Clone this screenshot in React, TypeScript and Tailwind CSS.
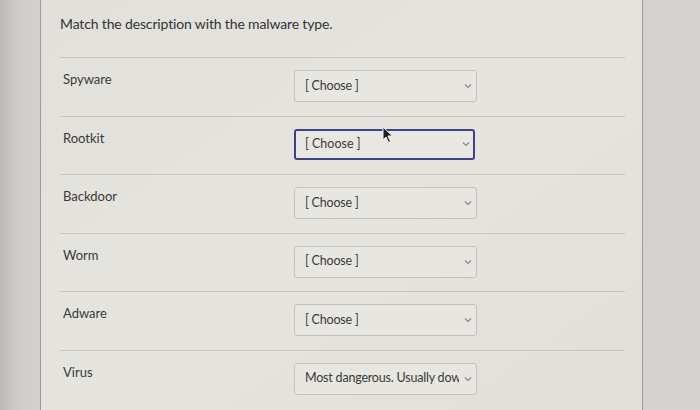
import React from 'react';

const rows = [
  { label: 'Spyware', value: '[ Choose ]' },
  { label: 'Rootkit', value: '[ Choose ]', focused: true },
  { label: 'Backdoor', value: '[ Choose ]' },
  { label: 'Worm', value: '[ Choose ]' },
  { label: 'Adware', value: '[ Choose ]' },
  { label: 'Virus', value: 'Most dangerous. Usually downloads' },
];

const Chevron = () => (
  <svg width="8" height="6" viewBox="0 0 8 6" className="shrink-0">
    <path d="M1 1.5 L4 4.5 L7 1.5" fill="none" stroke="#8a8884" strokeWidth="1.2" />
  </svg>
);

const Cursor = () => (
  <svg width="12" height="18" viewBox="0 0 12 18" className="absolute left-[88px] -top-[3px]">
    <path d="M1 1 L1 14 L4 11 L6.5 16.5 L8.5 15.5 L6 10 L10.5 10 Z" fill="#222" stroke="#f2f2f2" strokeWidth="1" />
  </svg>
);

export default function App() {
  return (
    <div className="flex w-[700px] h-[410px] overflow-hidden bg-[#d2d0cc] font-['Lato','Liberation_Sans',sans-serif]">
      <div className="w-[40px] shrink-0 bg-gradient-to-r from-[#bdbbb7] via-[#d0cecb] to-[#d4d2ce]" />
      <div className="w-[603px] shrink-0 border-l border-r border-[#9d9b97] bg-gradient-to-br from-[#e2e0db] via-[#e6e4df] to-[#e1dfda] pl-[19px] pr-[17px]">
        <div className="pt-[13px] h-[57px] text-[14px] text-[#333] tracking-[-0.15px]">
          Match the description with the malware type.
        </div>
        {rows.map((r) => (
          <div key={r.label} className="flex h-[58.5px] border-t border-[#c7c5c0]">
            <div className="w-[234px] pt-[12px] pl-[3px] text-[13px] text-[#3a3a3a]">{r.label}</div>
            <div className="relative mt-[12px]">
              {r.focused ? (
                <div className="flex items-center justify-between w-[181px] h-[31px] rounded-[3px] border-2 border-[#3e4389] bg-[#e9e7e2] pl-[9px] pr-[3px] text-[12.5px] text-[#3a3a3a]">
                  <span className="truncate">{r.value}</span>
                  <Chevron />
                </div>
              ) : (
                <div className="flex items-center justify-between w-[183px] h-[32px] rounded-[3px] border border-[#c4c2bd] bg-[#e8e6e1] pl-[10px] pr-[4px] text-[12.5px] text-[#3a3a3a]">
                  <span className="overflow-hidden whitespace-nowrap w-[154px] tracking-[-0.2px]">{r.value}</span>
                  <Chevron />
                </div>
              )}
              {r.focused && <Cursor />}
            </div>
          </div>
        ))}
      </div>
      <div className="flex-1 bg-[#d3d2cf]" />
    </div>
  );
}
